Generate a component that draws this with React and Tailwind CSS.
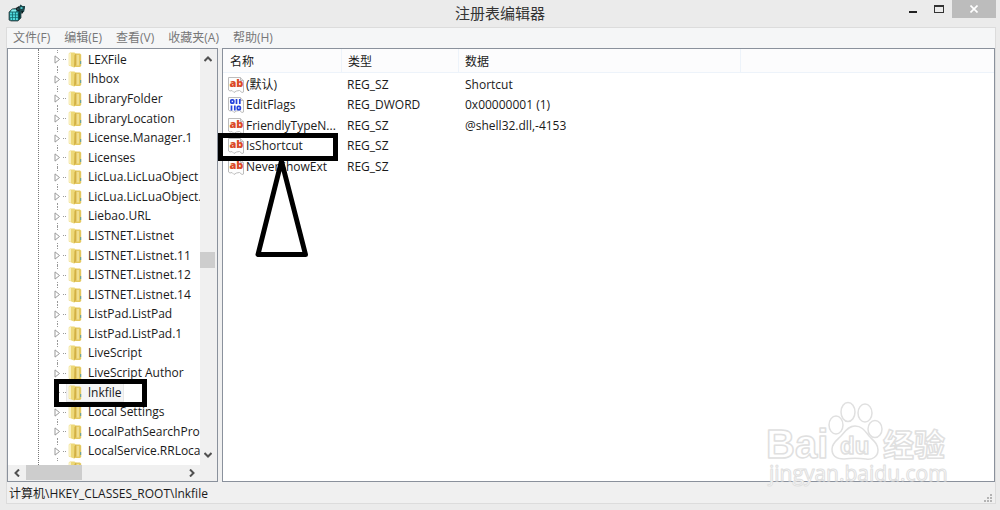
import React, { useState } from "react";
import clsx from "clsx";

const menuItems = ["文件(F)", "编辑(E)", "查看(V)", "收藏夹(A)", "帮助(H)"];

const treeKeys = [
  "LEXFile",
  "lhbox",
  "LibraryFolder",
  "LibraryLocation",
  "License.Manager.1",
  "Licenses",
  "LicLua.LicLuaObject",
  "LicLua.LicLuaObject.",
  "Liebao.URL",
  "LISTNET.Listnet",
  "LISTNET.Listnet.11",
  "LISTNET.Listnet.12",
  "LISTNET.Listnet.14",
  "ListPad.ListPad",
  "ListPad.ListPad.1",
  "LiveScript",
  "LiveScript Author",
  "lnkfile",
  "Local Settings",
  "LocalPathSearchPro",
  "LocalService.RRLoca",
];

const values = [
  { name: "(默认)", type: "REG_SZ", data: "Shortcut" },
  { name: "EditFlags", type: "REG_DWORD", data: "0x00000001 (1)" },
  { name: "FriendlyTypeN...", type: "REG_SZ", data: "@shell32.dll,-4153" },
  { name: "IsShortcut", type: "REG_SZ", data: "" },
  { name: "NeverShowExt", type: "REG_SZ", data: "" },
];

const AppIcon = () => (
  <svg width="18" height="18" viewBox="0 0 18 18" aria-hidden="true">
    <path d="M1 8l3-3 6-1 3 3v7l-3 3H3l-2-1z" fill="#15686d" stroke="#3c4a4b" strokeWidth=".8" />
    <path
      d="M2 8.500h2.200v2H2zM5 8.500h2.200v2H5zM8 8.500h1.800v2H8zM2 11.300h2.200v2H2zM5 11.300h2.200v2H5zM8 11.300h1.800v2H8zM2.500 14h1.800v2H2.500zM5 14h2.200v2H5zM8 14h1.800v2H8z"
      fill="#4fd9dc"
    />
    <path d="M4 5.500h5l-1 2H2.500z" fill="#8ceeee" />
    <path d="M10.500 9l2-2v6.500l-2 2.500z" fill="#0a3539" />
    <path d="M8 4l3-2 2 2-1.500 4L8 6z" fill="#162123" />
    <path d="M11 3l1.500-2.500 2 1.500L17 2v2l-1 4-4 1z" fill="#1c474b" />
    <path d="M12.500 3h2v2h-2zM9.500 4.500h1v1h-1z" fill="#4bc4c8" />
    <path d="M13.500 7h1.500v2l-1.500 1z" fill="#0b1d1f" />
  </svg>
);

const FolderIcon = () => (
  <svg width="14" height="16" viewBox="0 0 14 16" className="shrink-0" aria-hidden="true">
    <path d="M7 1.500h5l1.200 1.200V14L12 15H7z" fill="#e3c860" />
    <path d="M8.500 3H11v10.500H8.500z" fill="#f0de90" />
    <path d="M.8 1.500L2 .5h4.500l1 1v13L6 15.500.8 13.500z" fill="#edd878" />
    <path d="M.8 1.500L3 1v13l-2.200-1z" fill="#f9f0be" />
    <path d="M6.500 3l1.700-1.500V13l-2.200 2.500z" fill="#d2b045" />
    <path d="M12 9h1.200v3H12z" fill="#6fa39a" />
  </svg>
);

const ValueIcon = ({ type }) => (
  <svg width="16" height="16" viewBox="0 0 16 16" className="shrink-0" aria-hidden="true">
    <path
      d="M.5.5h12l3 3v11.500l-1.500.5-2.500-2-3 .5-2.500 1.500-2-2-2 .5-1.500-1z"
      fill="#fdfdfd"
      stroke="#bdbdbd"
    />
    <path d="M12.500.5v3h3" fill="#e4e4e4" stroke="#bdbdbd" />
    {type === "REG_DWORD" ? (
      <g fill="none" stroke="#2443dd" strokeWidth="1.700">
        <rect x="2.800" y="2.800" width="3" height="3.400" rx="1" />
        <path d="M8.500 2v5M11.800 2v5M3.500 8.500v5M6.800 8.500v5" />
        <rect x="9.300" y="9.300" width="3" height="3.400" rx="1" />
      </g>
    ) : (
      <text
        x="1.500"
        y="10"
        fontFamily="Open Sans, sans-serif"
        fontSize="11"
        fontWeight="800"
        fill="#da4a27"
      >
        ab
      </text>
    )}
  </svg>
);

const Chevron = ({ d }) => (
  <svg width="8" height="8" viewBox="0 0 8 8" aria-hidden="true">
    <path d={d} fill="none" stroke="#505050" strokeWidth="2" />
  </svg>
);

const TitleBar = () => (
  <header className="grid h-[27px] shrink-0 grid-cols-[1fr_auto_1fr] items-start">
    <div className="pt-1 pl-2">
      <AppIcon />
    </div>
    <h1 className="pt-[3px] text-[15px] leading-5 text-[#333]">注册表编辑器</h1>
    <div className="flex justify-end pr-1">
      <button type="button" aria-label="最小化" className="flex h-[18px] w-[26px] items-center justify-center">
        <span className="mt-[5px] h-[2px] w-2 bg-[#222]" />
      </button>
      <button type="button" aria-label="最大化" className="flex h-[18px] w-[26px] items-center justify-center">
        <span className="h-2 w-[10px] border border-t-2 border-[#333]" />
      </button>
      <button
        type="button"
        aria-label="关闭"
        className="flex h-[18px] w-11 items-center justify-center bg-[#bcbcbc]"
      >
        <svg width="8" height="8" viewBox="0 0 8 8" aria-hidden="true">
          <path d="M.5.5l7 7M7.500.5l-7 7" stroke="#fff" strokeWidth="1.600" />
        </svg>
      </button>
    </div>
  </header>
);

const TreeRow = ({ name, selected, onSelect }) => (
  <li className="flex min-h-0 flex-1 items-center">
    <div className="flex h-full w-[58px] shrink-0 items-center justify-end">
      <div className="mr-[2px] flex h-full w-2 flex-col items-center">
        <span className="flex-1 border-l border-dotted border-[#999]" />
        <svg width="8" height="9" viewBox="0 0 8 9" className="my-[2px] shrink-0" aria-hidden="true">
          <path d="M2 .9l4.500 3.600L2 8.100z" fill="#fff" stroke="#999" />
        </svg>
        <span className="flex-1 border-l border-dotted border-[#999]" />
      </div>
      <span className="w-[3px] border-t border-dotted border-[#999]" />
    </div>
    <button
      type="button"
      onClick={onSelect}
      className={clsx(
        "flex h-full items-center gap-1 pl-[2px] whitespace-nowrap",
        selected && "bg-[#f5f5f5] ring-1 ring-[#e8e8e8] ring-inset"
      )}
    >
      <FolderIcon />
      <span className="px-[2px]">{name}</span>
    </button>
  </li>
);

const TreePanel = () => {
  const [selected, setSelected] = useState("lnkfile");

  return (
    <nav className="flex w-[211px] shrink-0 flex-col border border-[#8a919c] bg-white">
      <div className="flex min-h-0 flex-1">
        <ul className="relative flex min-w-0 flex-1 flex-col overflow-hidden pt-px">
          <li aria-hidden="true" className="absolute inset-y-0 left-[30px] border-l border-dotted border-[#777]" />
          {treeKeys.map((k) => (
            <TreeRow key={k} name={k} selected={k === selected} onSelect={() => setSelected(k)} />
          ))}
          <li className="h-1 shrink-0 overflow-hidden pl-[60px]">
            <FolderIcon />
          </li>
        </ul>
        <div className="flex w-[17px] shrink-0 flex-col items-center justify-between bg-[#f0f0f0] py-[6px] pr-[2px]">
          <Chevron d="M.5 6L4 2.500 7.500 6" />
          <div className="mt-[189px] h-4 w-full bg-[#cdcdcd]" />
          <div className="flex-1" />
          <Chevron d="M.5 2L4 5.500 7.500 2" />
        </div>
      </div>
      <div className="flex h-4 shrink-0 items-center bg-[#f0f0f0] pb-px">
        <div className="flex w-[18px] justify-center">
          <Chevron d="M6 .5L2.500 4 6 7.500" />
        </div>
        <div className="h-full w-14 bg-[#cdcdcd]" />
        <div className="flex-1" />
        <div className="mr-[21px] flex">
          <Chevron d="M2 .5L5.500 4 2 7.500" />
        </div>
      </div>
    </nav>
  );
};

const ValueList = () => (
  <main className="min-w-0 flex-1 border border-[#8a919c] bg-white">
    <table className="w-full table-fixed border-separate border-spacing-0 text-left">
      <colgroup>
        <col className="w-[119px]" />
        <col className="w-[117px]" />
        <col className="w-[282px]" />
        <col />
      </colgroup>
      <thead>
        <tr className="h-6 bg-[#fcfcfd]">
          {["名称", "类型", "数据", ""].map((h, i) => (
            <th
              key={i}
              className={clsx(
                "border-b border-[#edf3fa] p-0 pt-[2px] font-normal",
                i === 0 ? "pl-[7px]" : "pl-[6px]",
                i < 3 && "border-r"
              )}
            >
              {h}
            </th>
          ))}
        </tr>
      </thead>
      <tbody>
        {values.map((v) => (
          <tr key={v.name} className="odd:h-[21px] even:h-5">
            <td className="p-0 pt-[2px] pl-[5px]">
              <div className="flex items-center gap-[2px] whitespace-nowrap">
                <ValueIcon type={v.type} />
                {v.name}
              </div>
            </td>
            <td className="p-0 pt-[2px] pl-[5px]">{v.type}</td>
            <td className="p-0 pt-[2px] pl-[6px]">{v.data}</td>
            <td className="p-0" />
          </tr>
        ))}
      </tbody>
    </table>
  </main>
);

// Black marker boxes and the pointer drawn over the window
const Marks = () => (
  <svg
    className="pointer-events-none absolute top-0 left-0"
    width="400"
    height="420"
    viewBox="0 0 400 420"
    fill="none"
    stroke="#000"
    strokeWidth="5"
    aria-hidden="true"
  >
    <rect x="220.500" y="135.500" width="115" height="23" />
    <rect x="56.500" y="381.500" width="88" height="23" />
    <path d="M281.500 161L258 254.500h47.500z" strokeLinejoin="round" />
  </svg>
);

const Watermark = () => (
  <svg
    className="pointer-events-none absolute right-[50px] bottom-5"
    width="184"
    height="90"
    viewBox="0 0 184 90"
    fill="#fff"
    stroke="#e0e0e0"
    strokeWidth="1.500"
    strokeLinejoin="round"
    aria-hidden="true"
  >
    <g fontFamily="Liberation Sans, Noto Sans CJK SC, sans-serif" fontWeight="700">
      <text x="0" y="58" fontSize="40">
        Bai
      </text>
      <ellipse cx="70" cy="25" rx="7" ry="9" />
      <ellipse cx="82" cy="12" rx="7" ry="9.500" />
      <ellipse cx="99" cy="13" rx="7" ry="9" />
      <ellipse cx="109" cy="29" rx="7" ry="8.500" />
      <path d="M89 26c7 0 10 5 14 10 5 5 9 8 9 14 0 7-6 10-12 9-7-1-15-1-22 0-7 0-12-3-12-10 0-6 5-9 9-13s7-10 14-10z" />
      <text x="74" y="54" fontSize="24">
        du
      </text>
      <text x="117" y="56" fontSize="31">
        经验
      </text>
    </g>
    <text x="3" y="81" fontFamily="Open Sans, sans-serif" fontSize="21" strokeWidth="1">
      jingyan.baidu.com
    </text>
  </svg>
);

const App = () => {
  return (
    <div className="relative flex h-screen flex-col overflow-hidden bg-[#ebebeb] pb-[6px] font-['Open_Sans','Noto_Sans_CJK_SC',sans-serif] text-[12px] leading-4 text-[#1a1a1a]">
      <TitleBar />
      <div className="mr-1 ml-[6px] flex min-h-0 flex-1 flex-col border border-[#dcdcdc] bg-[#f0f0f0]">
        <div className="flex h-5 shrink-0 items-center gap-[14px] bg-[#f5f6f7] pl-[6px] text-[#777]">
          {menuItems.map((m) => (
            <button key={m} type="button" className="whitespace-nowrap">
              {m}
            </button>
          ))}
        </div>
        <div className="flex min-h-0 flex-1 gap-1">
          <TreePanel />
          <ValueList />
        </div>
        <footer className="flex h-[21px] shrink-0 items-center justify-between pt-[2px] pl-[2px]">
          <span>计算机\HKEY_CLASSES_ROOT\lnkfile</span>
          <svg width="10" height="10" viewBox="0 0 10 10" className="mt-2 mr-[2px]" aria-hidden="true">
            <path
              d="M7 1h2v2H7zM4 4h2v2H4zM7 4h2v2H7zM1 7h2v2H1zM4 7h2v2H4zM7 7h2v2H7z"
              fill="#b4b4b4"
            />
          </svg>
        </footer>
      </div>
      <Marks />
      <Watermark />
    </div>
  );
};

export default App;
